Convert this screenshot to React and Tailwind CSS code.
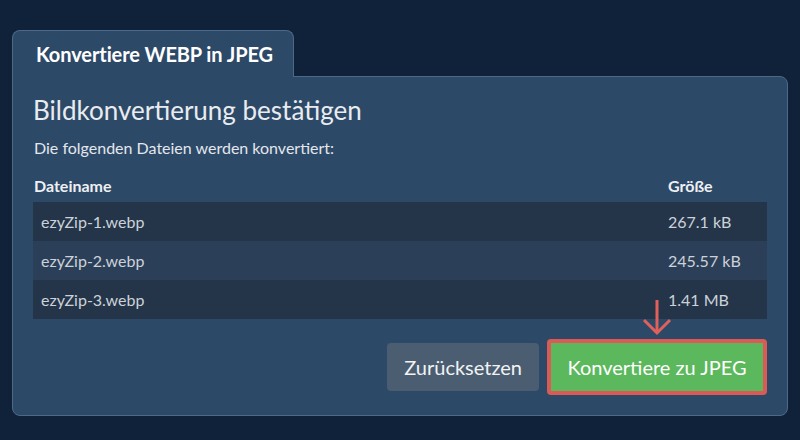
export default function App() {
  const files = [
    { name: "ezyZip-1.webp", size: "267.1 kB" },
    { name: "ezyZip-2.webp", size: "245.57 kB" },
    { name: "ezyZip-3.webp", size: "1.41 MB" },
  ];

  return (
    <div
      className="w-[800px] h-[440px] bg-[#10223a] pt-[30px] px-[12px] overflow-hidden"
      style={{ fontFamily: "Lato, 'Open Sans', sans-serif" }}
    >
      {/* Tab */}
      <div className="relative z-10 -mb-px w-[282px] h-[47px] bg-[#2d4968] border border-b-0 border-[#4d6888] rounded-t-[8px] pl-[23px] pt-[10px]">
        <span className="text-[20px] leading-[26px] font-bold text-white tracking-[-0.1px]">Konvertiere WEBP in JPEG</span>
      </div>

      {/* Panel */}
      <div className="w-[776px] h-[340px] bg-[#2d4968] border border-[#4d6888] rounded-b-[8px] rounded-tr-[8px] pt-[17px] px-[20px] flex flex-col">
        <h1 className="text-[26px] leading-[32px] text-[#e9ecef]">Bildkonvertierung bestätigen</h1>
        <p className="mt-[12px] text-[16px] leading-[20px] text-[#e3e7ec] pl-[1px]">Die folgenden Dateien werden konvertiert:</p>

        <div className="mt-[18px] w-[734px]">
          <div className="flex text-[16px] font-bold text-[#eef0f2] leading-[20px] pb-[6px]">
            <div className="flex-1 pl-[1px]">Dateiname</div>
            <div className="w-[107px] pl-[8px]">Größe</div>
          </div>
          {files.map((f, i) => (
            <div
              key={f.name}
              className={`flex items-center h-[39px] text-[16px] text-[#ccd2da] ${i % 2 === 0 ? "bg-[#243549]" : "bg-[#2b4058]"}`}
            >
              <div className="flex-1 pl-[8px]">{f.name}</div>
              <div className="w-[107px] pl-[8px]">{f.size}</div>
            </div>
          ))}
        </div>

        <div className="mt-[20px] w-[734px] flex justify-end items-center gap-[8px]">
          <button className="h-[48px] px-[17px] rounded-[4px] bg-[#4b5d70] text-[20px] text-[#f1f3f5]">
            Zurücksetzen
          </button>
          <div className="relative">
            <button className="h-[56px] w-[220px] border-4 border-[#dc5a55] rounded-[4px] bg-[#5cb85c] text-[20px] text-white">
              Konvertiere zu JPEG
            </button>
            {/* annotation arrow */}
            <svg
              className="absolute left-1/2 -translate-x-1/2 bottom-[calc(100%+3px)]"
              width="32"
              height="36"
              viewBox="0 0 32 36"
              fill="none"
              stroke="#e0605a"
              strokeWidth="3"
            >
              <line x1="16" y1="0" x2="16" y2="33" />
              <polyline points="3,20 16,33 29,20" />
            </svg>
          </div>
        </div>
      </div>
    </div>
  );
}
